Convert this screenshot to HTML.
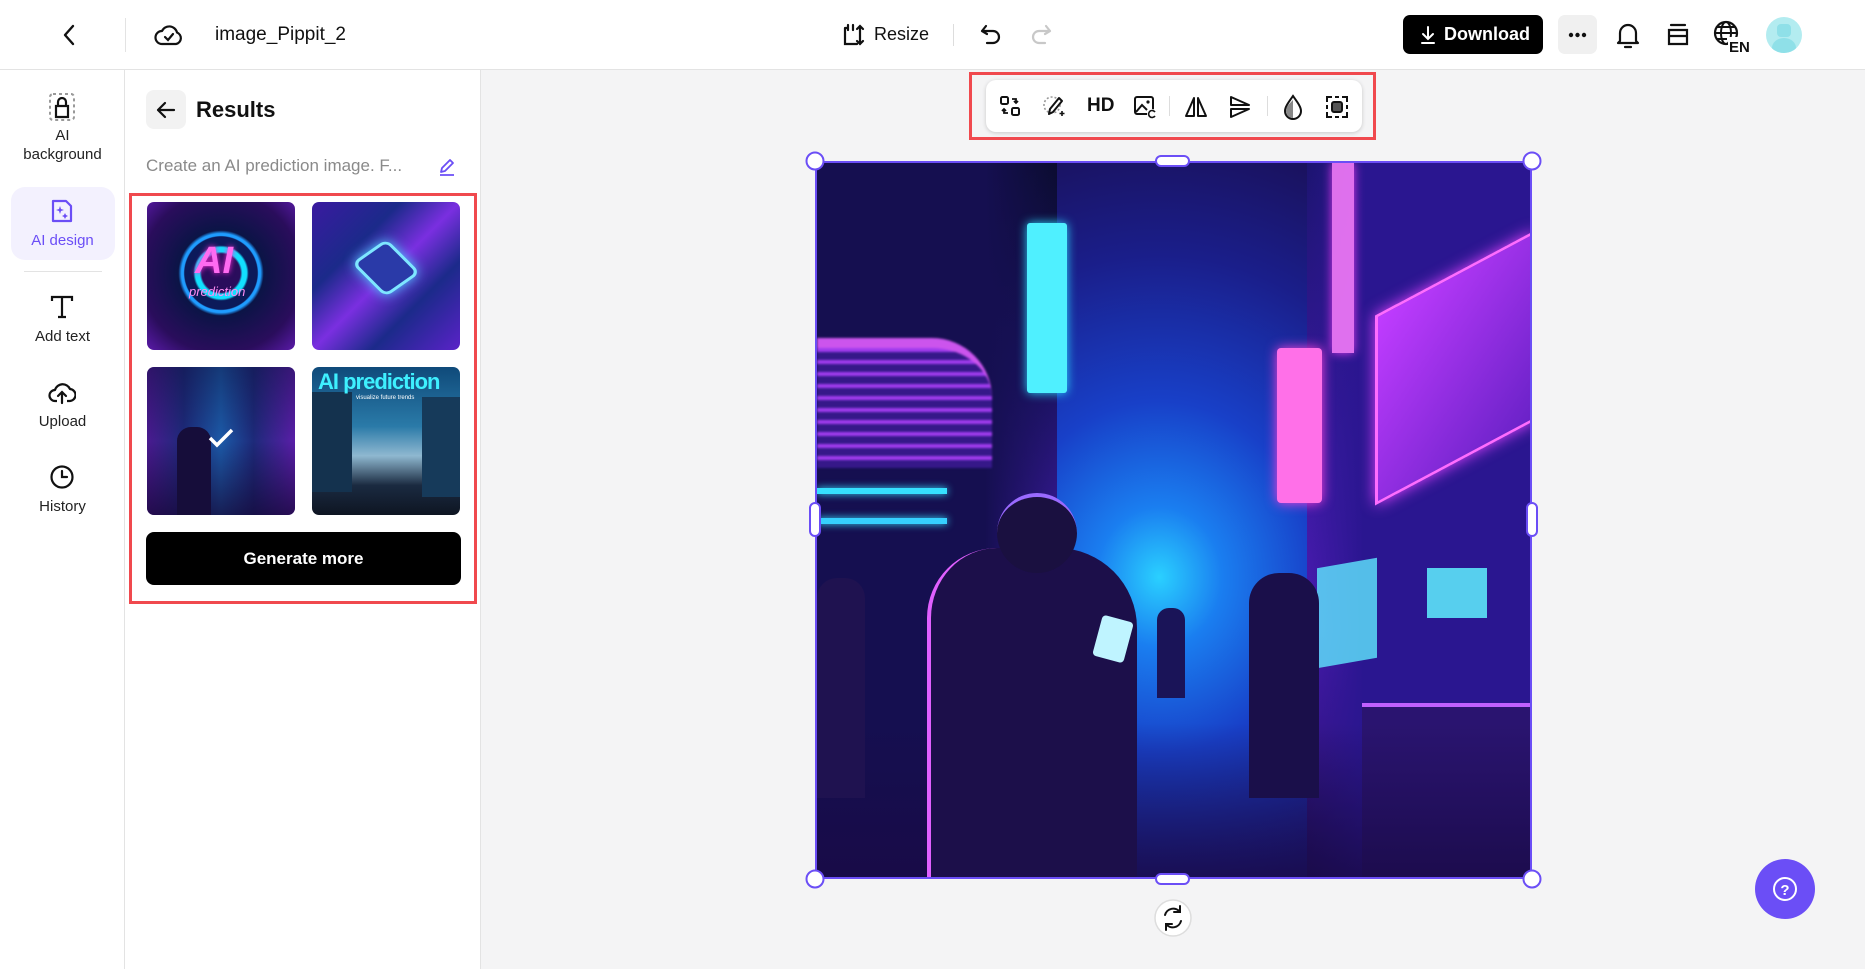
<!DOCTYPE html>
<html><head><meta charset="utf-8">
<style>
*{box-sizing:border-box;margin:0;padding:0}
body{width:1865px;height:969px;overflow:hidden;background:#f4f4f5;font-family:"Liberation Sans",sans-serif;color:#111;position:relative}
.abs{position:absolute}
.hdr{left:0;top:0;width:1865px;height:70px;background:#fff;border-bottom:1px solid #e3e3e3}
.nav{left:0;top:70px;width:125px;height:899px;background:#fff;border-right:1px solid #e3e3e3}
.panel{left:125px;top:70px;width:356px;height:899px;background:#fff;border-right:1px solid #e3e3e3}
.navitem{position:absolute;left:0;width:125px;text-align:center;font-size:15px;color:#222;line-height:19px}
.thumb{position:absolute;width:148px;height:148px;border-radius:7px;overflow:hidden}
svg{display:block}
.tb svg{position:absolute;top:14px}
</style></head><body>
<div class="abs hdr"></div>
<svg class="abs" style="left:60px;top:24px" width="20" height="22" viewBox="0 0 20 22"><path d="M13 2 L5 11 L13 20" fill="none" stroke="#111" stroke-width="2.4" stroke-linecap="round" stroke-linejoin="round"/></svg>
<div class="abs" style="left:125px;top:18px;width:1px;height:34px;background:#e3e3e3"></div>
<svg class="abs" style="left:154px;top:20px" width="30" height="30" viewBox="0 0 30 30"><path d="M8 24 H22 A6 6 0 0 0 23 12.5 A8 8 0 0 0 8 11 A6.5 6.5 0 0 0 8 24Z" fill="none" stroke="#111" stroke-width="2.2" stroke-linejoin="round"/><path d="M11 17 L14 20 L19 14" fill="none" stroke="#111" stroke-width="2.2" stroke-linecap="round"/></svg>
<div class="abs" style="left:215px;top:24px;width:131px;overflow:hidden;white-space:nowrap;font-size:19px">image_Pippit_2025</div>
<svg class="abs" style="left:841px;top:22px" width="26" height="26" viewBox="0 0 26 26"><path d="M4 6 V22 H16 M4 6 H7 M19 4 V22 M16 7 L19 4 L22 7 M16 19 L19 22 L22 19 M7 3 V8 M12 3 V8" fill="none" stroke="#111" stroke-width="2.2" stroke-linecap="round"/></svg>
<div class="abs" style="left:874px;top:24px;font-size:18px">Resize</div>
<div class="abs" style="left:953px;top:24px;width:1px;height:22px;background:#ddd"></div>
<svg class="abs" style="left:978px;top:22px" width="26" height="26" viewBox="0 0 26 26"><path d="M8 4 L4 9 L9 12 M4 9 H15 A6 6 0 0 1 15 21 H9" fill="none" stroke="#111" stroke-width="2.2" stroke-linecap="round" stroke-linejoin="round"/></svg>
<svg class="abs" style="left:1028px;top:22px" width="26" height="26" viewBox="0 0 26 26"><path d="M18 4 L22 9 L17 12 M22 9 H11 A6 6 0 0 0 11 21 H17" fill="none" stroke="#c8c8c8" stroke-width="2.2" stroke-linecap="round" stroke-linejoin="round"/></svg>
<div class="abs" style="left:1403px;top:15px;width:140px;height:39px;background:#000;border-radius:7px;color:#fff;font-size:18px;font-weight:bold;line-height:39px;padding-left:41px">Download</div>
<svg class="abs" style="left:1419px;top:25px" width="18" height="20" viewBox="0 0 18 20"><path d="M9 2 V13 M4 9 L9 14 L14 9 M3 18 H15" fill="none" stroke="#fff" stroke-width="2" stroke-linecap="round"/></svg>
<div class="abs" style="left:1558px;top:15px;width:39px;height:39px;background:#f0f0f0;border-radius:7px"></div>
<svg class="abs" style="left:1558px;top:15px" width="39" height="39" viewBox="0 0 39 39"><circle cx="13" cy="20" r="2.2" fill="#111"/><circle cx="19.5" cy="20" r="2.2" fill="#111"/><circle cx="26" cy="20" r="2.2" fill="#111"/></svg>
<svg class="abs" style="left:1614px;top:20px" width="28" height="30" viewBox="0 0 28 30"><path d="M6 21 V13 A8 8 0 0 1 22 13 V21 L24 23 H4 Z M11 27 H17" fill="none" stroke="#111" stroke-width="2.2" stroke-linejoin="round" stroke-linecap="round"/></svg>
<svg class="abs" style="left:1665px;top:22px" width="26" height="26" viewBox="0 0 26 26"><path d="M6 3 H20 M4 8 H22 V22 H4 Z M4 14 H22" fill="none" stroke="#111" stroke-width="2.2" stroke-linecap="round"/></svg>
<svg class="abs" style="left:1712px;top:19px" width="38" height="34" viewBox="0 0 38 34"><circle cx="14" cy="14" r="11" fill="none" stroke="#111" stroke-width="2.2"/><ellipse cx="14" cy="14" rx="5" ry="11" fill="none" stroke="#111" stroke-width="2"/><path d="M3 14 H25 M5 8 H23 M5 20 H15" stroke="#111" stroke-width="2"/><rect x="16" y="18" width="20" height="16" fill="#fff"/><text x="17" y="33" font-family="Liberation Sans" font-weight="bold" font-size="15" fill="#111">EN</text></svg>
<div class="abs" style="left:1766px;top:17px;width:36px;height:36px;border-radius:50%;background:#b3ecf0;overflow:hidden"><div class="abs" style="left:11px;top:7px;width:14px;height:13px;border-radius:4px;background:#8fe0e8"></div><div class="abs" style="left:6px;top:21px;width:24px;height:20px;border-radius:50%;background:#8fe0e8"></div></div>

<div class="abs nav"></div>
<svg class="abs" style="left:48px;top:92px" width="28" height="30" viewBox="0 0 28 30"><rect x="2" y="2" width="24" height="26" rx="3" fill="none" stroke="#999" stroke-width="2" stroke-dasharray="3 3"/><path d="M8 25 V14 H20 V25 Z M10 14 V10 A4 4 0 0 1 18 10 V14" fill="none" stroke="#111" stroke-width="2.2"/></svg>
<div class="navitem" style="top:126px">AI<br>background</div>
<div class="abs" style="left:11px;top:187px;width:104px;height:73px;border-radius:14px;background:#f3f1fe"></div>
<svg class="abs" style="left:49px;top:198px" width="26" height="26" viewBox="0 0 26 26"><path d="M4 3 H17 L22 8 V23 H4 Z" fill="none" stroke="#6b4ef6" stroke-width="2.2" stroke-linejoin="round"/><path d="M11 8 L12 11 L15 12 L12 13 L11 16 L10 13 L7 12 L10 11 Z M16 15 L17 17 L19 18 L17 19 L16 21 L15 19 L13 18 L15 17Z" fill="#6b4ef6"/></svg>
<div class="navitem" style="top:231px;color:#6b4ef6">AI design</div>
<div class="abs" style="left:24px;top:271px;width:78px;height:1px;background:#e3e3e3"></div>
<svg class="abs" style="left:49px;top:294px" width="26" height="26" viewBox="0 0 26 26"><path d="M3 7 V3 H23 V7 M13 3 V23 M9 23 H17" fill="none" stroke="#111" stroke-width="2.2"/></svg>
<div class="navitem" style="top:327px">Add text</div>
<svg class="abs" style="left:48px;top:379px" width="28" height="26" viewBox="0 0 28 26"><path d="M9 22 H7 A5.5 5.5 0 0 1 7 11 A8 8 0 0 1 22 10 A6 6 0 0 1 21 22 H19" fill="none" stroke="#111" stroke-width="2.2" stroke-linejoin="round"/><path d="M14 24 V13 M10 17 L14 13 L18 17" fill="none" stroke="#111" stroke-width="2.2" stroke-linecap="round"/></svg>
<div class="navitem" style="top:412px">Upload</div>
<svg class="abs" style="left:49px;top:464px" width="26" height="26" viewBox="0 0 26 26"><circle cx="13" cy="13" r="10.5" fill="none" stroke="#111" stroke-width="2.2"/><path d="M13 7 V13 H18" fill="none" stroke="#111" stroke-width="2.2" stroke-linecap="round"/></svg>
<div class="navitem" style="top:497px">History</div>

<div class="abs panel"></div>
<div class="abs" style="left:146px;top:90px;width:40px;height:39px;background:#f2f2f2;border-radius:8px"></div>
<svg class="abs" style="left:155px;top:99px" width="22" height="22" viewBox="0 0 22 22"><path d="M19 11 H3 M10 4 L3 11 L10 18" fill="none" stroke="#111" stroke-width="2.2" stroke-linecap="round" stroke-linejoin="round"/></svg>
<div class="abs" style="left:196px;top:97px;font-size:22px;font-weight:bold">Results</div>
<div class="abs" style="left:146px;top:156px;font-size:17px;color:#8a8a8a">Create an AI prediction image. F...</div>
<svg class="abs" style="left:437px;top:157px" width="20" height="20" viewBox="0 0 20 20"><path d="M4 15 L5 11 L13 3 L16 6 L8 14 Z M3 18 H17" fill="none" stroke="#6b4ef6" stroke-width="1.8" stroke-linejoin="round"/></svg>
<div class="abs" style="left:129px;top:193px;width:348px;height:411px;border:3px solid #f0494e"></div>
<div class="thumb" style="left:147px;top:202px;background:radial-gradient(circle at 50% 48%,#2a0d5c 0 18%,#12e0ff 20% 24%,#0c1a5a 26% 34%,#1f9cff 35% 37%,#0b1446 40%,#2a0d5c 75%,#5a1aa8)"><div class="abs" style="left:48px;top:38px;font-size:38px;font-weight:bold;font-style:italic;color:#ff6bf1;text-shadow:0 0 6px #ff2ad8">AI</div><div class="abs" style="left:42px;top:82px;font-size:13px;font-style:italic;color:#ff8cf3">prediction</div></div>
<div class="thumb" style="left:312px;top:202px;background:linear-gradient(135deg,#3a1aa0,#1b2a8a 30%,#7a2fe0 50%,#1b2a8a 70%,#5a22c8)"><div class="abs" style="left:50px;top:45px;width:48px;height:42px;border:3px solid #7ee6ff;border-radius:8px;transform:rotate(45deg) skew(-10deg);background:#2a3aa8;box-shadow:0 0 12px #49d0ff"></div></div>
<div class="thumb" style="left:147px;top:367px;background:linear-gradient(90deg,#4a1a90 0,#1d2a7a 25%,#1c5aa8 50%,#1d2a7a 72%,#5a1ea8 100%)"><div class="abs" style="left:0;top:0;width:148px;height:148px;background:linear-gradient(180deg,rgba(10,10,50,.4),rgba(0,0,0,0) 50%,rgba(20,5,50,.7))"></div><div class="abs" style="left:30px;top:60px;width:34px;height:88px;background:#160d3a;border-radius:14px 14px 0 0"></div><svg class="abs" style="left:60px;top:60px" width="28" height="22" viewBox="0 0 28 22"><path d="M3 11 L10 18 L25 3" fill="none" stroke="#fff" stroke-width="3.5"/></svg></div>
<div class="thumb" style="left:312px;top:367px;background:linear-gradient(180deg,#0f4a7a,#2a7aa8 40%,#8fb8d0 60%,#1a2a40 80%,#0e1522)"><div class="abs" style="left:0;top:25px;width:40px;height:100px;background:#14324e"></div><div class="abs" style="left:110px;top:30px;width:38px;height:100px;background:#163a5a"></div><div class="abs" style="left:6px;top:2px;font-size:22px;font-weight:bold;color:#3ef0ff;white-space:nowrap;letter-spacing:-1px">AI prediction</div><div class="abs" style="left:44px;top:28px;font-size:6px;color:#fff">visualize future trends</div></div>
<div class="abs" style="left:146px;top:532px;width:315px;height:53px;background:#000;border-radius:8px;color:#fff;text-align:center;font-size:17px;font-weight:bold;line-height:53px">Generate more</div>

<div class="abs" style="left:969px;top:72px;width:407px;height:68px;border:3px solid #f0494e"></div>
<div class="abs tb" style="left:986px;top:80px;width:376px;height:52px;background:#fff;border-radius:10px;box-shadow:0 1px 4px rgba(0,0,0,.18)">
<svg style="left:12px" width="24" height="24" viewBox="0 0 24 24"><rect x="3" y="3" width="7" height="7" rx="1.5" fill="none" stroke="#111" stroke-width="2"/><rect x="14" y="14" width="7" height="7" rx="1.5" fill="none" stroke="#111" stroke-width="2"/><path d="M14 5 H18 V9 M16 7 L18 9 L20 7 M10 19 H6 V15 M4 17 L6 15 L8 17" fill="none" stroke="#111" stroke-width="1.8"/></svg>
<svg style="left:56px" width="24" height="24" viewBox="0 0 24 24"><circle cx="10" cy="11" r="8" fill="none" stroke="#999" stroke-width="1.6" stroke-dasharray="2 2"/><path d="M7 20 L8 15 L17 4 L20 7 L11 18 Z" fill="#fff" stroke="#111" stroke-width="2" stroke-linejoin="round"/><path d="M20 17 V22 M17.5 19.5 H22.5" stroke="#111" stroke-width="1.6"/></svg>
<div style="position:absolute;left:101px;top:15px;font-size:19px;font-weight:bold">HD</div>
<svg style="left:146px" width="26" height="26" viewBox="0 0 26 26"><rect x="3" y="3" width="18" height="17" rx="2" fill="none" stroke="#111" stroke-width="2"/><path d="M4 18 L10 11 L15 16" fill="none" stroke="#111" stroke-width="2"/><circle cx="16" cy="8" r="1.6" fill="#111"/><circle cx="20" cy="20" r="5" fill="#fff"/><path d="M23 18 A3.5 3.5 0 1 0 23 22" fill="none" stroke="#111" stroke-width="1.6"/></svg>
<div style="position:absolute;left:183px;top:16px;width:1px;height:20px;background:#ddd"></div>
<svg style="left:197px" width="26" height="26" viewBox="0 0 26 26"><path d="M11 4 L3 22 H11 Z M15 4 L23 22 H15 Z" fill="none" stroke="#111" stroke-width="2" stroke-linejoin="round"/></svg>
<svg style="left:241px" width="26" height="26" viewBox="0 0 26 26"><path d="M4 3 L22 11 H4 Z M4 15 H22 L4 23 Z" fill="none" stroke="#111" stroke-width="2" stroke-linejoin="round"/></svg>
<div style="position:absolute;left:281px;top:16px;width:1px;height:20px;background:#ddd"></div>
<svg style="left:294px" width="26" height="26" viewBox="0 0 26 26"><path d="M13 2 C8 9 5 13 5 17 A8 8 0 0 0 21 17 C21 13 18 9 13 2Z" fill="none" stroke="#111" stroke-width="2"/><path d="M13 6 V24 A7 7 0 0 1 6 17 C6 13 9 10 13 6Z" fill="#888"/></svg>
<svg style="left:338px" width="26" height="26" viewBox="0 0 26 26"><path d="M3 8 V3 H8 M18 3 H23 V8 M23 18 V23 H18 M8 23 H3 V18 M11 3 H15 M11 23 H15 M3 11 V15 M23 11 V15" fill="none" stroke="#111" stroke-width="2"/><rect x="8" y="8" width="10" height="10" rx="2" fill="#555" stroke="#111" stroke-width="2"/></svg>
</div>

<div class="abs" style="left:815px;top:161px;width:717px;height:718px;overflow:hidden;border:2px solid #6b4ef6;background:radial-gradient(ellipse at 48% 58%,#2ad0ff 0,#1a7ef0 12%,#1840c8 30%,#1a1e8a 55%,#1a0f55 80%)">
 <div class="abs" style="left:0;top:0;width:240px;height:718px;background:linear-gradient(90deg,#150f50 70%,rgba(21,15,80,0)),linear-gradient(180deg,#0b0c30 0,#1a1260 30%,#3a1a9a 55%,#1d1466 100%)"></div>
 <div class="abs" style="left:0;top:175px;width:175px;height:130px;border-top:10px solid #e05cff;border-radius:0 60px 0 0;background:repeating-linear-gradient(180deg,#b040ff 0 4px,#3a1a90 4px 12px);opacity:.9;filter:blur(1px)"></div>
 <div class="abs" style="left:0;top:325px;width:130px;height:6px;background:#36e0ff;box-shadow:0 0 8px #36e0ff"></div>
 <div class="abs" style="left:0;top:355px;width:130px;height:6px;background:#36d0ff;box-shadow:0 0 8px #36e0ff"></div>
 <div class="abs" style="left:210px;top:60px;width:40px;height:170px;background:#4ff0ff;border-radius:3px;box-shadow:0 0 10px #2ad8ff"></div>
 <div class="abs" style="left:490px;top:0;width:227px;height:718px;background:linear-gradient(90deg,rgba(28,20,112,0),#2a1690 25%),linear-gradient(180deg,#1c1470 0,#3a1aa0 40%,#4a1ab0 65%,#1f1060 100%)"></div>
 <div class="abs" style="left:558px;top:110px;width:160px;height:190px;border:3px solid #ff6cff;transform:skewY(-28deg);background:linear-gradient(135deg,#c03cff,#6a22c8);box-shadow:0 0 14px #e040ff"></div>
 <div class="abs" style="left:515px;top:0;width:22px;height:190px;background:#ff80ff;box-shadow:0 0 10px #ff40ff;opacity:.85"></div>
 <div class="abs" style="left:460px;top:185px;width:45px;height:155px;background:#ff70e8;border-radius:4px;box-shadow:0 0 12px #ff40e0"></div>
 <div class="abs" style="left:545px;top:540px;width:172px;height:178px;background:#2a1470;border-top:4px solid #c060ff"></div>
 <div class="abs" style="left:500px;top:400px;width:60px;height:100px;background:#5fe8ff;transform:skewY(-10deg);opacity:.8"></div>
 <div class="abs" style="left:0;top:560px;width:717px;height:160px;background:linear-gradient(180deg,rgba(20,10,80,0),rgba(25,10,70,.85))"></div>
 <div class="abs" style="left:110px;top:385px;width:210px;height:335px;background:#1c0f4a;border-radius:70px 80px 0 0;border-left:4px solid #e060ff"></div>
 <div class="abs" style="left:180px;top:330px;width:80px;height:80px;background:#1a1040;border-radius:50%;border-top:4px solid #9a6aff"></div>
 <div class="abs" style="left:280px;top:455px;width:32px;height:42px;background:#bff4ff;border-radius:4px;transform:rotate(15deg)"></div>
 <div class="abs" style="left:432px;top:410px;width:70px;height:225px;background:#1a0f4a;border-radius:30px 30px 0 0"></div>
 <div class="abs" style="left:340px;top:445px;width:28px;height:90px;background:#1a1458;border-radius:12px 12px 0 0"></div>
 <div class="abs" style="left:0;top:415px;width:48px;height:220px;background:#1f1250;border-radius:20px 20px 0 0"></div>
 <div class="abs" style="left:610px;top:405px;width:60px;height:50px;background:#5ff0ff;opacity:.85"></div>
</div>
<svg class="abs" style="left:0;top:0;pointer-events:none" width="1865" height="969">
<g fill="#fff" stroke="#6b4ef6" stroke-width="2">
<circle cx="815" cy="161" r="8.5"/><circle cx="1532" cy="161" r="8.5"/><circle cx="815" cy="879" r="8.5"/><circle cx="1532" cy="879" r="8.5"/>
<rect x="1156" y="156" width="33" height="10" rx="5"/><rect x="1156" y="874" width="33" height="10" rx="5"/>
<rect x="810" y="503" width="10" height="33" rx="5"/><rect x="1527" y="503" width="10" height="33" rx="5"/>
</g>
<circle cx="1173" cy="918" r="18" fill="#fff" stroke="#ddd" stroke-width="1.5"/>
<path d="M1165 915 A8.5 8.5 0 0 1 1180 912 M1181 921 A8.5 8.5 0 0 1 1166 924 M1180 906 V912 H1174 M1166 930 V924 H1172" fill="none" stroke="#111" stroke-width="2" stroke-linecap="round"/>
<circle cx="1785" cy="889" r="30" fill="#6b4ef6"/>
<circle cx="1785" cy="889" r="11" fill="none" stroke="#fff" stroke-width="2"/>
<text x="1785" y="895" text-anchor="middle" font-family="Liberation Sans" font-weight="bold" font-size="15" fill="#fff">?</text>
</svg>
</body></html>
